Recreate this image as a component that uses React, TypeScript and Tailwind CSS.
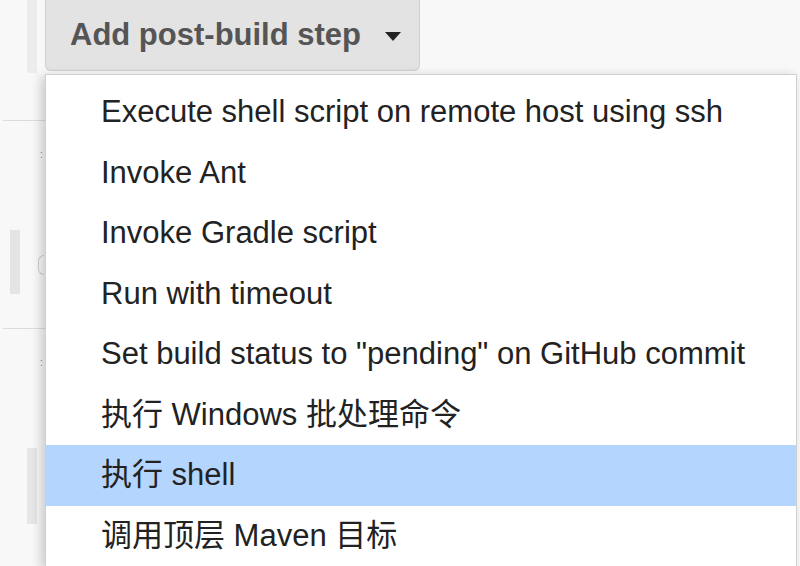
import React from 'react'

const items = [
  'Execute shell script on remote host using ssh',
  'Invoke Ant',
  'Invoke Gradle script',
  'Run with timeout',
  'Set build status to "pending" on GitHub commit',
  '执行 Windows 批处理命令',
  '执行 shell',
  '调用顶层 Maven 目标',
]

const font = { fontFamily: '"Liberation Sans", Arial, "Noto Sans CJK SC", sans-serif' }

export default function App() {
  const active = 6
  return (
    <div className="relative h-[566px] w-[800px] overflow-hidden bg-[#f8f8f8]" style={font}>
      {/* page behind the menu */}
      <div className="flex h-full">
        <div className="flex w-[45px] shrink-0 flex-col">
          <div className="ml-[27px] h-[73px] w-[10px] bg-[#ececec]" />
          <div className="mt-[47px] ml-[3px] h-px bg-[#dcdcdc]" />
          <div className="mt-[29px] ml-[40px] text-[10px] leading-none text-[#888]">:</div>
          <div className="mt-[70px] flex items-start">
            <div className="ml-[10px] h-[64px] w-[10px] bg-[#e4e4e4]" />
            <div className="mt-[25px] ml-[18px] h-[20px] w-[6px] rounded-l-full border border-r-0 border-[#cfcfcf]" />
          </div>
          <div className="mt-[34px] ml-[3px] h-px bg-[#dcdcdc]" />
          <div className="mt-[29px] ml-[40px] text-[10px] leading-none text-[#888]">:</div>
          <div className="mt-[80px] ml-[27px] h-[76px] w-[10px] bg-[#e6e6e6]" />
        </div>
        <div className="flex flex-1 flex-col">
          <button className="flex h-[71px] w-[375px] items-center gap-[24px] rounded-b-[6px] border border-t-0 border-[#cfcfcf] bg-[#e3e3e3] pl-[24px] text-[31px] font-bold text-[#555]">
            Add post-build step
            <span className="mt-[3px] h-0 w-0 border-x-[8px] border-t-[9px] border-x-transparent border-t-[#222]" />
          </button>
        </div>
      </div>

      {/* dropdown menu */}
      <div className="absolute top-[74px] left-[45px] w-[752px] border border-[#cfcfcf] bg-white pt-[7px] shadow-[-4px_2px_10px_rgba(0,0,0,0.18)]">
        {items.map((label, i) => (
          <div
            key={label}
            className={`flex h-[60.5px] items-center pl-[55px] text-[31px] text-[#222] ${i === active ? 'bg-[#b4d5fe]' : ''}`}
          >
            {label}
          </div>
        ))}
      </div>
    </div>
  )
}
